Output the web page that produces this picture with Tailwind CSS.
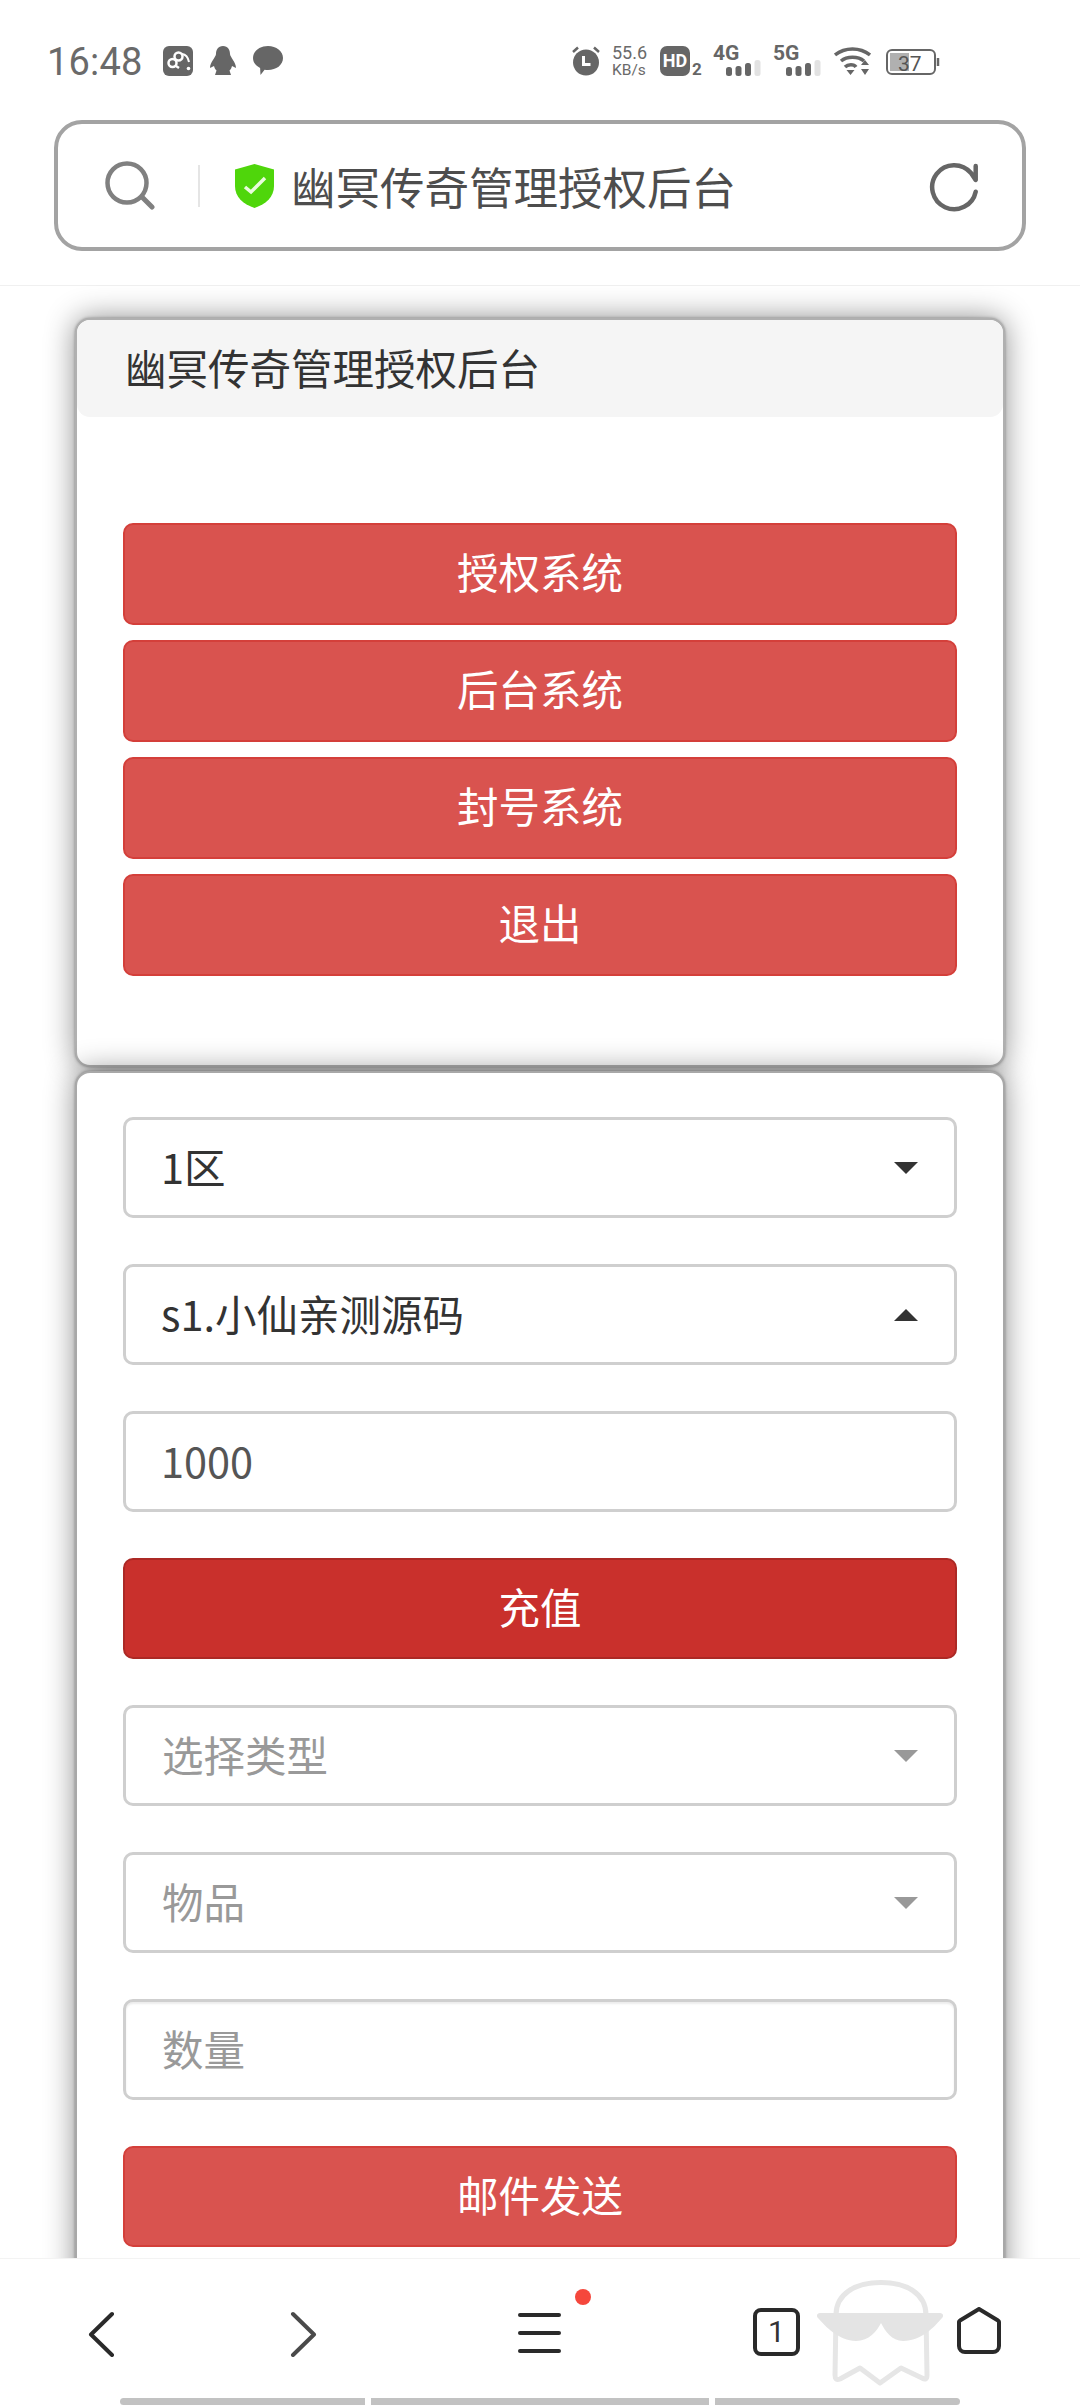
<!DOCTYPE html>
<html lang="zh">
<head>
<meta charset="utf-8">
<script src="https://cdn.jsdelivr.net/npm/@tailwindcss/browser@4"></script>
</head>
<body class="bg-white">
<div class="relative w-[1080px] h-[2408px] overflow-hidden bg-white font-['Noto_Sans_CJK_SC','Noto_Sans',sans-serif] text-[#333]">

  <!-- Status bar -->
  <div class="h-[120px] pt-[42px] pl-[47px] pr-[140px] flex items-start text-[#6a6a6a] font-['Roboto',sans-serif]">
    <span class="text-[38px] leading-[40px] tracking-[0.2px] w-[116px]">16:48</span>
    <div class="flex items-start gap-[17px] mt-[4px]">
      <svg width="30" height="30" viewBox="0 0 30 30"><rect width="30" height="30" rx="6" fill="#666"/><circle cx="15.500" cy="10.500" r="4" fill="none" stroke="#fff" stroke-width="2.500"/><circle cx="9.500" cy="17" r="4" fill="none" stroke="#fff" stroke-width="2.500"/><path d="M19 8c4 .5 6 3 7 8" fill="none" stroke="#fff" stroke-width="2"/><path d="M13 20l3 2" stroke="#fff" stroke-width="2.500"/><circle cx="25.500" cy="22.500" r="1.800" fill="#fff"/></svg>
      <svg width="26" height="29" viewBox="0 0 26 29"><path d="M13 0c5 0 7 4 7 8 0 3 6 8 6 14l-4-2c-.5 2-1 3-2.500 4.500L21 29H5l1.500-4.500C5 23 4.500 22 4 20l-4 2C0 16 6 11 6 8c0-4 2-8 7-8z" fill="#666"/></svg>
      <svg width="30" height="29" viewBox="0 0 30 29"><path d="M15 0c8.300 0 15 5 15 12s-6.700 12-15 12c-1.300 0-2.300-.1-3.400-.3L7.500 29l-.4-7C3 20 0 16.500 0 12 0 5 6.700 0 15 0z" fill="#666"/></svg>
    </div>
    <div class="ml-auto flex items-start mt-[4px]">
      <svg width="30" height="30" viewBox="0 0 30 30"><circle cx="15" cy="16.500" r="13" fill="#666"/><path d="M2 6l5-4.500M28 6l-5-4.500" stroke="#666" stroke-width="2.500" fill="none"/><path d="M12.500 10v8.500h7" stroke="#fff" stroke-width="3" fill="none"/></svg>
      <div class="ml-[11px] w-[38px] -mt-[2px] flex flex-col items-start">
        <span class="text-[18px] leading-[17px]">55.6</span>
        <span class="text-[15.500px] leading-[18px]">KB/s</span>
      </div>
      <div class="ml-[10px] w-[43px] flex items-end">
        <span class="w-[30px] h-[30px] rounded-[7px] bg-[#666] text-white font-bold text-[18px] leading-[30px] text-center">HD</span>
        <span class="ml-[2px] font-bold text-[17px] leading-[14px] text-[#666]">2</span>
      </div>
      <div class="relative ml-[10px] w-[48px] h-[30px]">
        <span class="absolute left-0 -top-[3px] font-bold text-[21px] leading-[20px] text-[#666]">4G</span>
        <svg width="48" height="30" viewBox="0 0 48 30"><rect x="13" y="21" width="6" height="9" rx="2.500" fill="#666"/><rect x="22.500" y="20" width="6" height="10" rx="2.500" fill="#666"/><rect x="32" y="17" width="6" height="13" rx="2.500" fill="#666"/><rect x="41.500" y="14" width="6" height="16" rx="2.500" fill="#e2e2e2"/></svg>
      </div>
      <div class="relative ml-[12px] w-[48px] h-[30px]">
        <span class="absolute left-0 -top-[3px] font-bold text-[21px] leading-[20px] text-[#666]">5G</span>
        <svg width="48" height="30" viewBox="0 0 48 30"><rect x="13" y="21" width="6" height="9" rx="2.500" fill="#666"/><rect x="22.500" y="20" width="6" height="10" rx="2.500" fill="#666"/><rect x="32" y="17" width="6" height="13" rx="2.500" fill="#666"/><rect x="41.500" y="14" width="6" height="16" rx="2.500" fill="#e2e2e2"/></svg>
      </div>
      <svg class="ml-[13px]" width="37" height="30" viewBox="0 0 37 30"><path d="M1 9c10-8 25-8 35 0M7 15c6-5 17-5 23 0M11 21c3-3 9-3 11 0" fill="none" stroke="#666" stroke-width="3.500"/><path d="M12.500 24h8l-4 5zM27 19h8l-4-5zM27 23h8l-4 6z" fill="#666"/></svg>
      <div class="relative ml-[15px] w-[54px] h-[26px] mt-[3px]">
        <svg width="54" height="26" viewBox="0 0 54 26"><rect x="1" y="1" width="48" height="24" rx="5" fill="none" stroke="#666" stroke-width="2"/><rect x="4" y="4" width="19" height="18" fill="#b0b0b0"/><path d="M52 9v8" stroke="#666" stroke-width="2.500"/></svg>
        <span class="absolute left-[12px] top-[3px] text-[21px] leading-[24px] text-[#555]">37</span>
      </div>
    </div>
  </div>

  <!-- Address bar -->
  <div class="h-[166px] border-b border-[#f0f0f0] px-[54px]">
    <div class="h-[131px] rounded-[28px] border-[4px] border-[#a3a3a3] flex items-center pl-[47px] pr-[41px]">
      <svg width="50" height="50" viewBox="0 0 50 50"><circle cx="22" cy="22" r="19.500" fill="none" stroke="#808080" stroke-width="4.500"/><path d="M37 36l10 10" stroke="#808080" stroke-width="5" stroke-linecap="round"/></svg>
      <div class="w-[2px] h-[42px] bg-[#e5e5e5] ml-[43px]"></div>
      <svg class="ml-[35px]" width="39" height="44" viewBox="0 0 39 44"><path d="M19.500 0L39 5.500V22c0 11-8 18-19.500 22C8 40 0 33 0 22V5.500z" fill="#4fd60b"/><path d="M10 23l6 5 14-14" fill="none" stroke="#e9fbdc" stroke-width="3.500"/></svg>
      <span class="ml-[17px] text-[44.500px] leading-[60px] text-[#4d4d4d]">幽冥传奇管理授权后台</span>
      <svg class="ml-auto" width="56" height="56" viewBox="0 0 56 56"><path d="M50.700 33.700A22 22 0 1 1 46 15L50.700 22V8" fill="none" stroke="#666" stroke-width="4.500" stroke-linecap="round" stroke-linejoin="round"/></svg>
    </div>
  </div>

  <!-- Content -->
  <div class="px-[75px] pt-[32px] flex flex-col gap-[4px]">
    <section class="h-[749px] bg-white rounded-[15px] border-[2px] border-[#b0b0b0] shadow-[0_0_3px_rgba(0,0,0,0.35),0_0_30px_rgba(0,0,0,0.45)]">
      <div class="h-[97px] bg-[#f5f5f5] rounded-[13px] flex items-center pl-[48px] pb-[3px] text-[41.500px] leading-[60px] text-[#333]">幽冥传奇管理授权后台</div>
      <div class="pt-[106px] px-[46px] flex flex-col gap-[15px]">
        <button class="h-[102px] pb-[5px] w-full rounded-[10px] bg-[#d9534f] border-[2px] border-[#d43f3a] text-white text-[41.500px]">授权系统</button>
        <button class="h-[102px] pb-[5px] w-full rounded-[10px] bg-[#d9534f] border-[2px] border-[#d43f3a] text-white text-[41.500px]">后台系统</button>
        <button class="h-[102px] pb-[5px] w-full rounded-[10px] bg-[#d9534f] border-[2px] border-[#d43f3a] text-white text-[41.500px]">封号系统</button>
        <button class="h-[102px] pb-[5px] w-full rounded-[10px] bg-[#d9534f] border-[2px] border-[#d43f3a] text-white text-[41.500px]">退出</button>
      </div>
    </section>

    <section class="h-[1300px] bg-white rounded-[15px] border-[2px] border-[#a8a8a8] shadow-[0_0_3px_rgba(0,0,0,0.35),0_0_30px_rgba(0,0,0,0.45)] px-[46px] pt-[44px] flex flex-col gap-[46px]">
      <div class="h-[101px] shrink-0 rounded-[10px] border-[3px] border-[#cfcfcf] bg-white flex items-center pl-[35px] pr-[36px] text-[41.500px] text-[#333]">
        <span class="pb-[3px]">1区</span>
        <svg class="ml-auto" width="24" height="12" viewBox="0 0 24 12"><path d="M0 0h24L12 12z" fill="#333"/></svg>
      </div>
      <div class="h-[101px] shrink-0 rounded-[10px] border-[3px] border-[#cfcfcf] bg-white flex items-center pl-[35px] pr-[36px] text-[41.500px] text-[#333]">
        <span class="pb-[3px]">s1.小仙亲测源码</span>
        <svg class="ml-auto" width="24" height="12" viewBox="0 0 24 12"><path d="M0 12h24L12 0z" fill="#333"/></svg>
      </div>
      <div class="h-[101px] shrink-0 rounded-[10px] border-[3px] border-[#cfcfcf] bg-white flex items-center pl-[35px] pb-[3px] text-[41.500px] text-[#555]">1000</div>
      <button class="h-[101px] pb-[5px] shrink-0 w-full rounded-[10px] bg-[#c9302c] border-[2px] border-[#ac2925] text-white text-[41.500px]">充值</button>
      <div class="h-[101px] shrink-0 rounded-[10px] border-[3px] border-[#cfcfcf] bg-white flex items-center pl-[36px] pr-[36px] text-[41.500px] text-[#999]">
        <span class="pb-[3px]">选择类型</span>
        <svg class="ml-auto" width="24" height="12" viewBox="0 0 24 12"><path d="M0 0h24L12 12z" fill="#999"/></svg>
      </div>
      <div class="h-[101px] shrink-0 rounded-[10px] border-[3px] border-[#cfcfcf] bg-white flex items-center pl-[36px] pr-[36px] text-[41.500px] text-[#999]">
        <span class="pb-[3px]">物品</span>
        <svg class="ml-auto" width="24" height="12" viewBox="0 0 24 12"><path d="M0 0h24L12 12z" fill="#999"/></svg>
      </div>
      <div class="h-[101px] shrink-0 rounded-[10px] border-[3px] border-[#cfcfcf] bg-white shadow-[inset_0_2px_2px_rgba(0,0,0,0.08)] flex items-center pl-[36px] pb-[3px] text-[41.500px] text-[#999]">数量</div>
      <button class="h-[101px] pb-[5px] shrink-0 w-full rounded-[10px] bg-[#d9534f] border-[2px] border-[#d43f3a] text-white text-[41.500px]">邮件发送</button>
    </section>
  </div>

  <!-- Bottom navigation overlays the page -->
  <nav class="absolute left-0 bottom-0 w-[1080px] h-[150px] bg-white border-t border-[#f3f3f3] z-20">
    <svg class="absolute left-[88px] top-[52px]" width="28" height="46" viewBox="0 0 28 46"><path d="M24 3L3 23.500 24 44" fill="none" stroke="#2a2a2a" stroke-width="4" stroke-linecap="round" stroke-linejoin="round"/></svg>
    <svg class="absolute left-[289px] top-[52px]" width="28" height="46" viewBox="0 0 28 46"><path d="M4 3l21 20.500L4 44" fill="none" stroke="#4a4a4a" stroke-width="4" stroke-linecap="round" stroke-linejoin="round"/></svg>
    <div class="absolute left-[518px] top-[54px] w-[43px] flex flex-col gap-[14px]">
      <div class="h-[4px] bg-[#2a2a2a] rounded-full"></div>
      <div class="h-[4px] bg-[#2a2a2a] rounded-full"></div>
      <div class="h-[4px] bg-[#2a2a2a] rounded-full"></div>
    </div>
    <div class="absolute left-[575px] top-[30px] w-[16px] h-[16px] rounded-full bg-[#f5473c]"></div>
    <div class="absolute left-[753px] top-[49px] w-[47px] h-[48px] rounded-[8px] border-[4px] border-[#2a2a2a] flex items-center justify-center font-['Roboto',sans-serif] text-[30px] leading-none text-[#333]">1</div>
    <svg class="absolute left-[817px] top-[20px]" width="126" height="108" viewBox="0 0 126 108"><path d="M19 36C19 15 38 3.500 64 3.500S109 15 109 36L110 96q0 6-5 3L84 89 63 104 43 89 23 100q-5 2-5-4z" fill="#fff" stroke="#e6e6e6" stroke-width="5" stroke-linejoin="round"/><path d="M3 34H123C126 34 127 37 125 39 118 47 105 62 86 62 75 62 68 52 64 44 60 52 52 62 39 62 22 62 8 47 1 39-1 37 0 34 3 34Z" fill="#e4e4e4"/></svg>
    <svg class="absolute left-[956px] top-[48px]" width="46" height="48" viewBox="0 0 46 48"><path d="M23 2L42 13.500a2 2 0 0 1 1 2V39a6 6 0 0 1-6 6H9a6 6 0 0 1-6-6V15.500a2 2 0 0 1 1-2Z" fill="none" stroke="#2a2a2a" stroke-width="4" stroke-linejoin="round"/></svg>
    <div class="absolute left-[120px] top-[139px] flex gap-[6px] h-[7px]">
      <div class="w-[245px] bg-[#c2c2c2] rounded-l-full"></div>
      <div class="w-[338px] bg-[#c2c2c2]"></div>
      <div class="w-[245px] bg-[#c2c2c2] rounded-r-full"></div>
    </div>
  </nav>
</div>
</body>
</html>
